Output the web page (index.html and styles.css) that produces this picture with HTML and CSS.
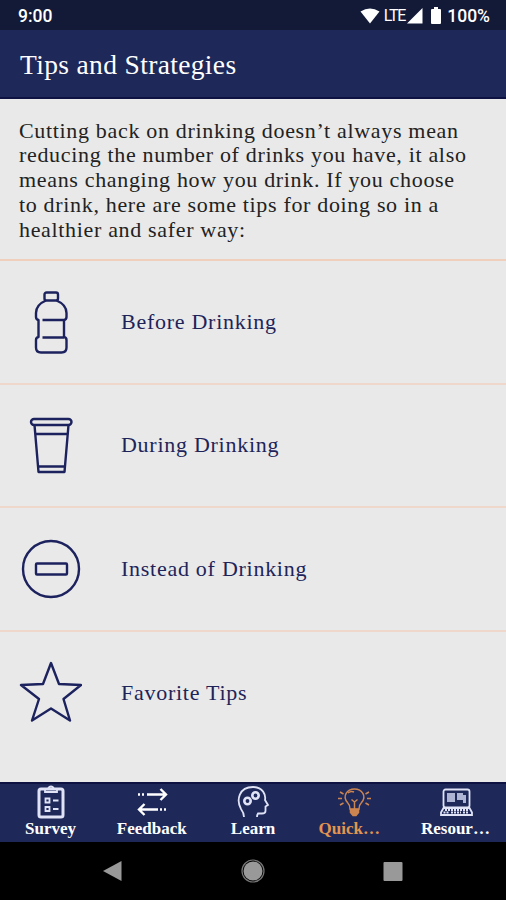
FILE: index.html
```html
<!DOCTYPE html>
<html lang="en">
<head>
    <meta charset="UTF-8">
    <meta name="viewport" content="width=device-width, initial-scale=1.0">
    <title>Tips and Strategies</title>
    <link rel="stylesheet" href="styles.css">
</head>
<body>
    <div class="status-bar">
        <span class="time">9:00</span>
        <div class="status-icons">
            <svg class="wifi" width="20" height="16" viewBox="0 0 20 16"><path d="M.5 3.5Q10-2.5 19.5 3.5L10 15.5Z"/></svg>
            <span class="lte">LTE</span>
            <svg class="signal" width="16" height="16" viewBox="0 0 16 16"><path d="M15.5 0V15.5H0Z"/></svg>
            <svg class="battery" width="10" height="17" viewBox="0 0 10 17"><path d="M3 0H7V2H9Q10 2 10 3V16Q10 17 9 17H1Q0 17 0 16V3Q0 2 1 2H3Z"/></svg>
            <span class="percent">100%</span>
        </div>
    </div>

    <header>
        <h1>Tips and Strategies</h1>
    </header>

    <main>
        <p class="intro">Cutting back on drinking doesn’t always mean reducing the number of drinks you have, it also means changing how you drink. If you choose to drink, here are some tips for doing so in a healthier and safer way:</p>
        <ul class="tips">
            <li>
                <svg width="64" height="64" viewBox="0 0 64 64">
                    <rect x="26.500" y="2.500" width="13.500" height="8" rx="2"/>
                    <path d="M28 10.500C22 13 18 17 18 23V27Q18 29.500 20.500 30V47Q18 47.500 18 50V57.500Q18 62.500 23 62.500H43.500Q48.500 62.500 48.500 57.500V50Q48.500 47.500 46 47V30Q48.500 29.500 48.500 27V23C48.500 17 44.500 13 38.500 10.500M24.500 30H46M24.500 47.500H46"/>
                </svg>
                <span>Before Drinking</span>
            </li>
            <li>
                <svg width="64" height="64" viewBox="0 0 64 64">
                    <rect x="13" y="6" width="40.500" height="6" rx="3"/>
                    <path d="M16.500 12L20.500 59H46.500L50.500 12M17.500 21H49.500M20 53.500H46.500"/>
                </svg>
                <span>During Drinking</span>
            </li>
            <li>
                <svg width="64" height="64" viewBox="0 0 64 64">
                    <circle cx="33" cy="32" r="28"/>
                    <rect x="18" y="26.500" width="31" height="11" rx="1"/>
                </svg>
                <span>Instead of Drinking</span>
            </li>
            <li>
                <svg width="64" height="64" viewBox="0 0 64 64">
                    <path class="star" d="M33 2L41 23L63 24L45.500 38L52 59.500L33 47.500L14 59.500L21 38L3 24L25 23Z"/>
                </svg>
                <span>Favorite Tips</span>
            </li>
        </ul>
    </main>

    <nav>
        <a class="tab">
            <svg width="36" height="36" viewBox="0 0 36 36">
                <rect class="board" x="6" y="5" width="24" height="28" rx="2"/>
                <path d="M12 5V8H24V5H21Q20 2.500 18 2.500T15 5Z"/>
                <path d="M12.500 14.500H16.500V18.500H12.500ZM12.500 23H16.500V27H12.500ZM20 16.500H25.500M20 25H25.500"/>
            </svg>
            <span>Survey</span>
        </a>
        <a class="tab">
            <svg class="arrows" width="36" height="36" viewBox="0 0 36 36">
                <path d="M13 10.500H32M26.500 5L32 10.500L26.500 16M4 10.500H6M8 10.500H10M24 25.500H5M10.500 20L5 25.500L10.500 31M26 25.500H28M30 25.500H32"/>
            </svg>
            <span>Feedback</span>
        </a>
        <a class="tab">
            <svg width="36" height="36" viewBox="0 0 36 36">
                <path d="M9 33Q9 29 6 25C1 16 4 3 18 3C28 3 31 11 30 16L33 21L30.500 22.500V27Q30.500 29.500 27 29.500H23Q22 31 22 33"/>
                <circle class="gear" cx="12.500" cy="17" r="3.200"/>
                <circle class="gear" cx="20.500" cy="11.500" r="3.200"/>
            </svg>
            <span>Learn</span>
        </a>
        <a class="tab active">
            <svg class="bulb" width="36" height="36" viewBox="0 0 36 36">
                <path d="M14 25Q14 21 11.500 18.500C6 12 11 5 18.500 5S31 12 25.500 18.500Q23 21 23 25Z"/>
                <path class="base" d="M14.500 25.500H22.500V28.500L20 31.500H17L14.500 28.500Z"/>
                <path d="M18.500 25V18L15.500 15.500M18.500 18L21.500 15.500M2 14.500H6M31 14.500H35M4 8L7.500 10M33 8L29.500 10M4 21L7.500 19M33 21L29.500 19M12 9Q15 6.500 18 8"/>
            </svg>
            <span>Quick…</span>
        </a>
        <a class="tab">
            <svg width="36" height="36" viewBox="0 0 36 36">
                <rect x="6.500" y="5.500" width="26" height="18" rx="2"/>
                <path class="screen" d="M10 9H18V18H10ZM20 9H26V11H29V19H26V16H20Z"/>
                <path d="M6.500 24L4 28.500V31H35V28.500L32.500 24Z"/>
                <path class="keys" d="M8 26H31M6.500 28.500H12M26 28.500H32M14 28.500H24"/>
            </svg>
            <span>Resour…</span>
        </a>
    </nav>

    <div class="system-bar">
        <svg width="22" height="24" viewBox="0 0 22 24"><path d="M1 12L19.500 2V22Z"/></svg>
        <svg width="24" height="24" viewBox="0 0 24 24"><circle class="ring" cx="12" cy="12" r="11"/><circle cx="12" cy="12" r="9.500"/></svg>
        <svg width="22" height="24" viewBox="0 0 22 24"><rect x="1.500" y="3" width="19" height="19" rx="1"/></svg>
    </div>
</body>
</html>
```
FILE: styles.css
```css
* {
    box-sizing: border-box;
}
body {
    display: flex;
    flex-direction: column;
    height: 900px;
    margin: 0;
    background-color: #e9e9e9;
    font-family: "Liberation Serif", "Times New Roman", serif;
}
.status-bar {
    display: flex;
    justify-content: space-between;
    align-items: center;
    height: 30px;
    padding: 1px 16px 0 18px;
    background-color: #131a37;
    color: #fff;
    font-family: Roboto, sans-serif;
    font-size: 17.5px;
    font-weight: 500;
}
.status-icons {
    display: flex;
    align-items: center;
}
.status-icons svg {
    fill: #fff;
}
.lte {
    margin: 0 2px 0 4px;
    font-size: 16px;
    font-weight: 400;
    letter-spacing: -1.2px;
}
.battery {
    margin: 0 6px 0 8px;
}
header {
    display: flex;
    align-items: center;
    height: 69px;
    padding: 3px 20px 0;
    background-color: #1e295a;
    border-bottom: 2px solid #0d1242;
}
h1 {
    margin: 0;
    color: #fff;
    font-size: 27.5px;
    font-weight: 400;
    letter-spacing: 0.35px;
}
main {
    flex: 1;
}
.intro {
    height: 162px;
    margin: 0;
    padding: 19.5px 32px 0 19px;
    border-bottom: 2px solid #f0cfbd;
    color: #222;
    font-size: 22px;
    line-height: 24.8px;
    letter-spacing: 0.67px;
}
.tips {
    margin: 0;
    padding: 0;
    list-style-type: none;
}
.tips li {
    display: flex;
    align-items: center;
    gap: 39px;
    height: 123.5px;
    padding-left: 18px;
    border-bottom: 2px solid #efd7cb;
    color: #1e2459;
    font-size: 22px;
    letter-spacing: 0.73px;
}
.tips li:last-child {
    border-bottom: none;
}
.tips svg {
    fill: none;
    stroke: #1c225e;
    stroke-width: 2.4;
    stroke-linejoin: round;
}
nav {
    display: flex;
    height: 60px;
    background-color: #1e295a;
    border-top: 2px solid #0d1242;
}
.tab {
    display: flex;
    flex: 1;
    flex-direction: column;
    align-items: center;
    color: #fff;
    font-size: 17px;
    font-weight: 700;
    line-height: 18px;
}
.tab svg {
    fill: none;
    stroke: #dfe3f5;
    stroke-width: 1.8;
}
.tab .board {
    stroke-width: 3;
}
.tab .arrows {
    stroke: #fff;
    stroke-width: 2.4;
}
.tab .gear {
    stroke-width: 2.6;
}
.tab .screen {
    fill: #aeb4d3;
    stroke: none;
}
.tab .keys {
    stroke-dasharray: 2 1;
}
.tab.active {
    color: #e3954f;
}
.tab.active span {
    margin-right: 10px;
}
.tab .bulb {
    stroke: #cc8550;
    stroke-width: 1.5;
}
.tab .base {
    fill: #cc8550;
}
.system-bar {
    display: flex;
    justify-content: space-between;
    align-items: center;
    height: 58px;
    padding: 0 102px;
    background-color: #000;
}
.system-bar svg {
    fill: #999;
}
.system-bar .ring {
    fill: none;
    stroke: #777;
    stroke-width: 1.2;
}
```
